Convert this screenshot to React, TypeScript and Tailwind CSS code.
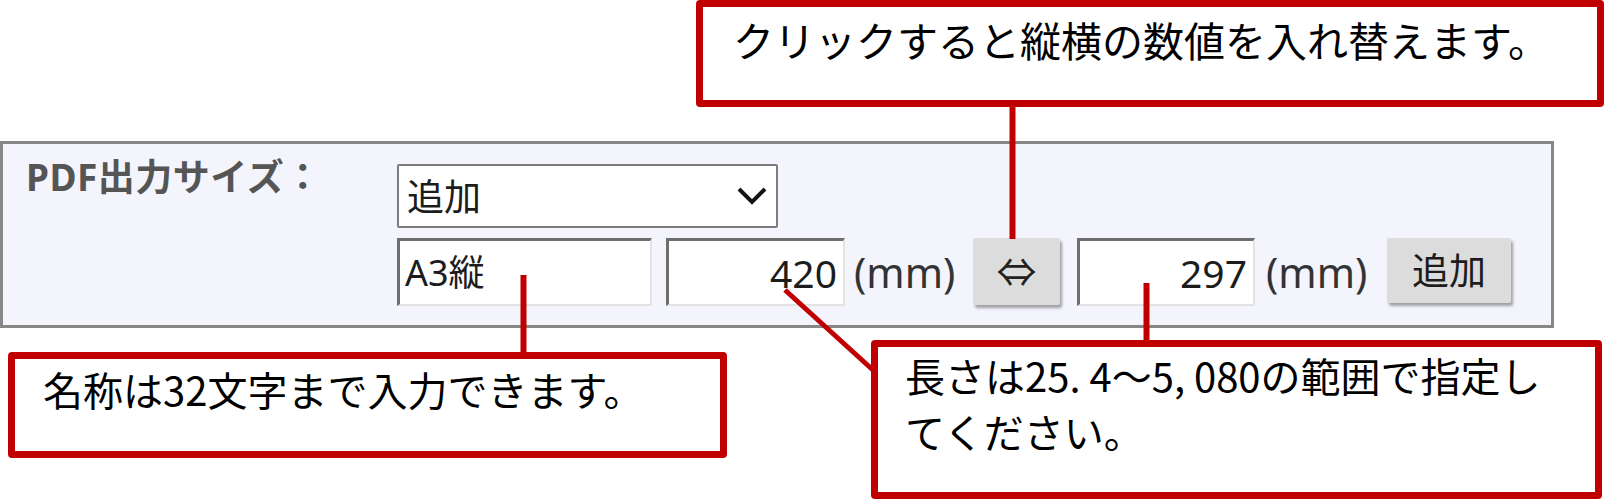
import React from "react";

const cjk = "font-['Noto_Sans_CJK_JP','Noto_Sans',sans-serif]";
const ui = "font-['Noto_Sans','Noto_Sans_CJK_JP',sans-serif]";

function Input({ w, value, right }: { w: string; value: string; right?: boolean }) {
  return (
    <div
      className={`${w} h-[68px] bg-white border-t-[3px] border-l-[3px] border-r-2 border-b-2 border-t-[#6e6e6e] border-l-[#6e6e6e] border-r-[#e3e3e3] border-b-[#e3e3e3] flex items-center ${
        right ? "justify-end pr-[6px] text-[39px]" : "justify-start pl-[5px] text-[36px]"
      } leading-none text-[#1c1c1c]`}
    >
      {value}
    </div>
  );
}

export default function App() {
  return (
    <div className={`relative w-[1604px] h-[501px] bg-white overflow-hidden ${cjk}`}>
      {/* top callout */}
      <div className="flex h-[141px] pl-[696px]">
        <div className="w-[908px] h-[107px] border-[7px] border-[#c00000] rounded-[4px] pl-[30px] pt-[8px] text-[41px] leading-[48px] text-black">
          クリックすると縦横の数値を入れ替えます。
        </div>
      </div>

      {/* panel */}
      <div className={`w-[1554px] h-[187px] border-[3px] border-[#878787] bg-[#f4f4fd] flex ${ui}`}>
        <div className="w-[394px] pl-[23px] pt-[11px] text-[37px] leading-[44px] font-bold text-[#555555] tracking-[0.5px]">
          PDF出力サイズ：
        </div>
        <div className="flex flex-col pt-[20px] gap-[10px]">
          <div className="w-[381px] h-[64px] bg-white border-2 border-[#7d7d7d] rounded-[2px] flex items-center justify-between pl-[8px] pr-[9px] text-[37px] leading-none text-[#1c1c1c]">
            <span>追加</span>
            <svg width="30" height="18" viewBox="0 0 30 18">
              <polyline points="2,2 15,15 28,2" fill="none" stroke="#151515" strokeWidth="4" />
            </svg>
          </div>
          <div className="flex items-start h-[68px]">
            <Input w="w-[255px]" value="A3縦" />
            <div className="ml-[14px]">
              <Input w="w-[179px]" value="420" right />
            </div>
            <span className="w-[128px] h-[68px] pl-[9px] flex items-center text-[41px] leading-none text-[#333333]">(mm)</span>
            <div className="w-[87px] h-[67px] bg-[#dcdcdc] rounded-[2px] shadow-[2px_3px_3px_rgba(0,0,0,0.35)] flex items-center justify-center text-[40px] leading-none text-[#222222]">
              ⇔
            </div>
            <div className="ml-[17px]">
              <Input w="w-[178px]" value="297" right />
            </div>
            <span className="w-[132px] h-[68px] pl-[11px] flex items-center text-[41px] leading-none text-[#333333]">(mm)</span>
            <div className="w-[124px] h-[65px] bg-[#dcdcdc] rounded-[2px] shadow-[2px_3px_3px_rgba(0,0,0,0.35)] flex items-center justify-center text-[37px] leading-none text-[#1c1c1c]">
              追加
            </div>
          </div>
        </div>
      </div>

      {/* bottom callouts */}
      <div className="flex items-start">
        <div className="ml-[8px] mt-[24px] w-[719px] h-[106px] border-[7px] border-[#c00000] rounded-[4px] pl-[28px] pt-[4px] text-[40px] leading-[52px] text-black">
          名称は32文字まで入力できます。
        </div>
        <div className="ml-[144px] mt-[12px] w-[731px] h-[159px] border-[7px] border-[#c00000] rounded-[4px] pl-[27px] pt-0 text-[40px] leading-[56px] text-black">
          長さは25. 4～5, 080の範囲で指定し
          <br />
          てください。
        </div>
      </div>

      {/* connector lines */}
      <svg className="absolute inset-0 pointer-events-none" width="1604" height="501" viewBox="0 0 1604 501">
        <line x1="1012.5" y1="106" x2="1012.5" y2="239" stroke="#c00000" strokeWidth="6" />
        <line x1="523.5" y1="275" x2="523.5" y2="353" stroke="#c00000" strokeWidth="6" />
        <line x1="1146.5" y1="283" x2="1146.5" y2="341" stroke="#c00000" strokeWidth="6" />
        <line x1="785" y1="290" x2="874" y2="371" stroke="#c00000" strokeWidth="5" />
      </svg>
    </div>
  );
}
